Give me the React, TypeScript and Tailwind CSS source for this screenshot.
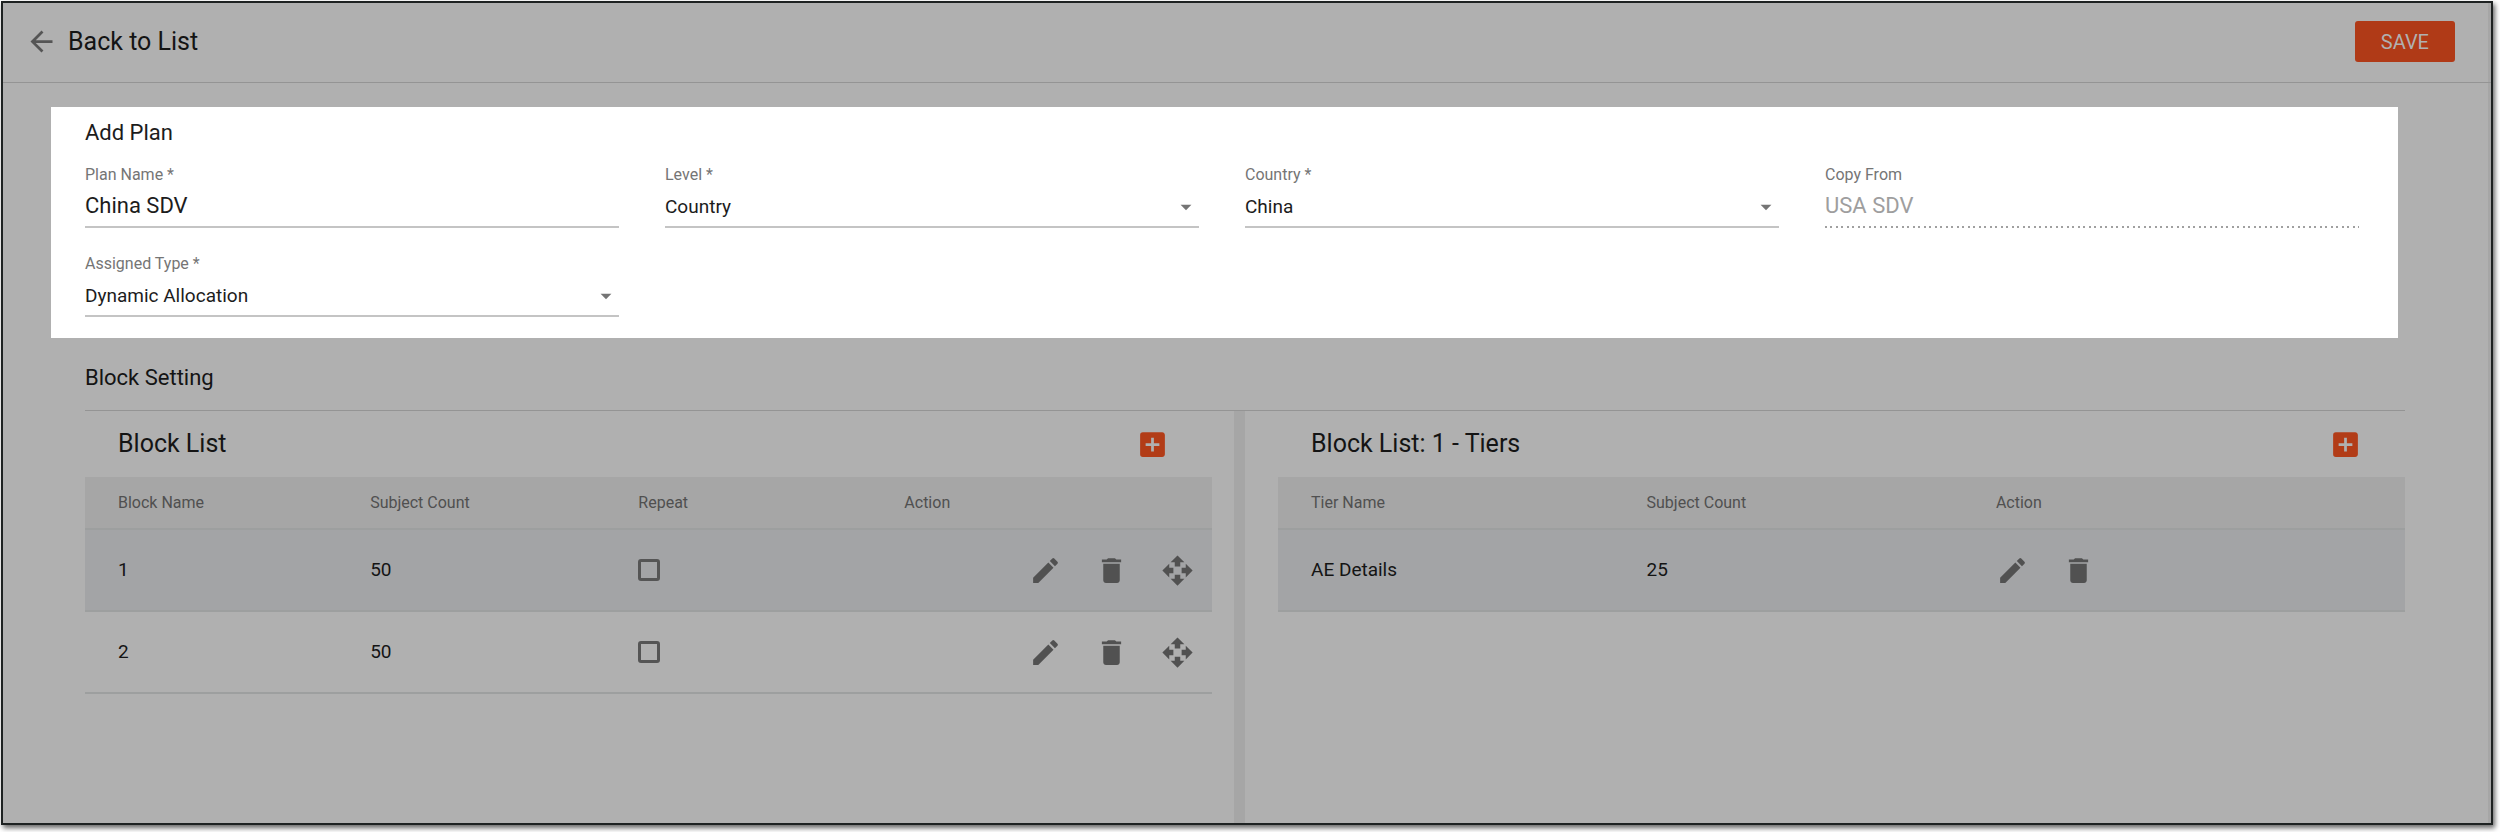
import React, { useId } from "react";
import { MdAddBox, MdArrowBack, MdArrowDropDown, MdDelete, MdEdit, MdOpenWith } from "react-icons/md";

type IconType = React.ComponentType<{ className?: string }>;

function SelectField({ label, value }: { label: string; value: string }) {
  const id = useId();
  return (
    <div className="flex min-w-0 flex-col">
      <label htmlFor={id} className="text-[16px] leading-6 text-[#757575]">
        {label}
      </label>
      <div className="relative">
        <select
          id={id}
          defaultValue={value}
          className="block h-[41px] w-full appearance-none border-b-2 border-[#c4c4c4] bg-transparent text-[19px] leading-6 text-[#1c1c1c] outline-none"
        >
          <option>{value}</option>
        </select>
        <MdArrowDropDown className="pointer-events-none absolute top-[7px] right-0 size-[26px] text-[#757575]" />
      </div>
    </div>
  );
}

function TextField({ label, value, disabled = false }: { label: string; value: string; disabled?: boolean }) {
  const id = useId();
  return (
    <div className="flex min-w-0 flex-col">
      <label htmlFor={id} className="text-[16px] leading-6 text-[#757575]">
        {label}
      </label>
      <input
        id={id}
        type="text"
        defaultValue={value}
        disabled={disabled}
        className="h-[41px] w-full border-b-2 border-[#c4c4c4] pb-0.5 text-[22px] text-[#1c1c1c] outline-none disabled:border-b-0 disabled:bg-[linear-gradient(to_right,#a0a0a0_0_2px,transparent_2px_5px,#a0a0a0_5px_7px,transparent_7px)] disabled:bg-[length:11px_2px] disabled:bg-bottom-left disabled:bg-repeat-x disabled:pb-1 disabled:text-[#9e9e9e]"
      />
    </div>
  );
}

function IconButton({ icon: Icon, label }: { icon: IconType; label: string }) {
  return (
    <button type="button" aria-label={label} className="block text-[#515151]">
      <Icon className="size-[33px]" />
    </button>
  );
}

function Panel({ title, children }: { title: string; children: React.ReactNode }) {
  return (
    <section className="min-w-0 flex-1">
      <div className="flex h-[66px] items-center justify-between pr-[43px] pl-[33px]">
        <h3 className="text-[25px] leading-8">{title}</h3>
        <button type="button" aria-label={`Add to ${title}`} className="block text-[#b23c17]">
          <MdAddBox className="size-[33px]" />
        </button>
      </div>
      {children}
    </section>
  );
}

const headRow = "h-[52px] border-b-2 border-[#9d9f9f] bg-[#a6a6a6] text-[16px] text-[#505050]";
const selectedRow = "h-[82px] border-b-2 border-[#9d9f9f] bg-[#a3a4a6]";
const plainRow = "h-[82px] border-b-2 border-[#9d9f9f]";

const blocks = [
  { name: "1", count: 50, selected: true },
  { name: "2", count: 50, selected: false },
];

function BlockTable() {
  return (
    <table className="w-full table-fixed border-collapse text-left text-[19px]">
      <colgroup>
        <col className="w-[25.3%]" />
        <col className="w-[23.8%]" />
        <col className="w-[23.6%]" />
        <col />
      </colgroup>
      <thead>
        <tr className={headRow}>
          <th className="pl-[33px] font-normal">Block Name</th>
          <th className="font-normal">Subject Count</th>
          <th className="font-normal">Repeat</th>
          <th className="font-normal">Action</th>
        </tr>
      </thead>
      <tbody>
        {blocks.map((b) => (
          <tr key={b.name} className={b.selected ? selectedRow : plainRow}>
            <td className="pl-[33px]">{b.name}</td>
            <td>{b.count}</td>
            <td>
              <input
                type="checkbox"
                aria-label={`Repeat block ${b.name}`}
                className="block size-[22px] appearance-none rounded-[3px] border-3 border-[#555555]"
              />
            </td>
            <td className="pr-[18px]">
              <div className="flex justify-end gap-[33px]">
                <IconButton icon={MdEdit} label={`Edit block ${b.name}`} />
                <IconButton icon={MdDelete} label={`Delete block ${b.name}`} />
                <IconButton icon={MdOpenWith} label={`Move block ${b.name}`} />
              </div>
            </td>
          </tr>
        ))}
      </tbody>
    </table>
  );
}

function TierTable() {
  return (
    <table className="w-full table-fixed border-collapse text-left text-[19px]">
      <colgroup>
        <col className="w-[32.7%]" />
        <col className="w-[31%]" />
        <col />
      </colgroup>
      <thead>
        <tr className={headRow}>
          <th className="pl-[33px] font-normal">Tier Name</th>
          <th className="font-normal">Subject Count</th>
          <th className="font-normal">Action</th>
        </tr>
      </thead>
      <tbody>
        <tr className={selectedRow}>
          <td className="pl-[33px]">AE Details</td>
          <td>25</td>
          <td>
            <div className="flex gap-[33px]">
              <IconButton icon={MdEdit} label="Edit AE Details" />
              <IconButton icon={MdDelete} label="Delete AE Details" />
            </div>
          </td>
        </tr>
      </tbody>
    </table>
  );
}

export default function App() {
  return (
    <div className="flex min-h-screen flex-col bg-white pt-px pr-[7px] pb-[7px] pl-px font-['Roboto',sans-serif] text-[#141414]">
      <div className="flex flex-1 flex-col border-2 border-[#1e2222] bg-[#b0b0b0] shadow-[2px_3px_5px_rgba(0,0,0,0.6),inset_-3px_0_0_#a6a6a6]">
        <header className="flex h-[80px] items-center justify-between border-b border-[#949494] pr-9 pb-0.5 pl-[22px]">
          <a href="#list" className="flex items-center gap-2.5 text-[25px] leading-8">
            <MdArrowBack className="size-[33px] text-[#555555]" />
            Back to List
          </a>
          <button type="button" className="h-[41px] rounded-[3px] bg-[#b03a17] px-[26px] text-[20px] text-[#b0b0b0]">
            SAVE
          </button>
        </header>

        <main className="flex flex-1 flex-col pt-6">
          <section className="mr-[93px] ml-12 bg-white pt-2.5 pr-[39px] pb-[21px] pl-[34px]">
            <h2 className="mb-3.5 text-[22px] leading-8 text-[#1c1c1c]">Add Plan</h2>
            <div className="grid grid-cols-4 gap-x-[46px] gap-y-6">
              <TextField label="Plan Name *" value="China SDV" />
              <SelectField label="Level *" value="Country" />
              <SelectField label="Country *" value="China" />
              <TextField label="Copy From" value="USA SDV" disabled />
              <SelectField label="Assigned Type *" value="Dynamic Allocation" />
            </div>
          </section>

          <div className="mt-6 mr-[86px] ml-[82px] flex flex-1 flex-col">
            <h2 className="border-b border-[#949494] pb-4 text-[22px] leading-8">Block Setting</h2>
            <div className="flex flex-1">
              <Panel title="Block List">
                <BlockTable />
              </Panel>
              <div className="mr-[33px] ml-[22px] w-[11px] bg-[#a6a6a6]" />
              <Panel title="Block List: 1 - Tiers">
                <TierTable />
              </Panel>
            </div>
          </div>
        </main>
      </div>
    </div>
  );
}
